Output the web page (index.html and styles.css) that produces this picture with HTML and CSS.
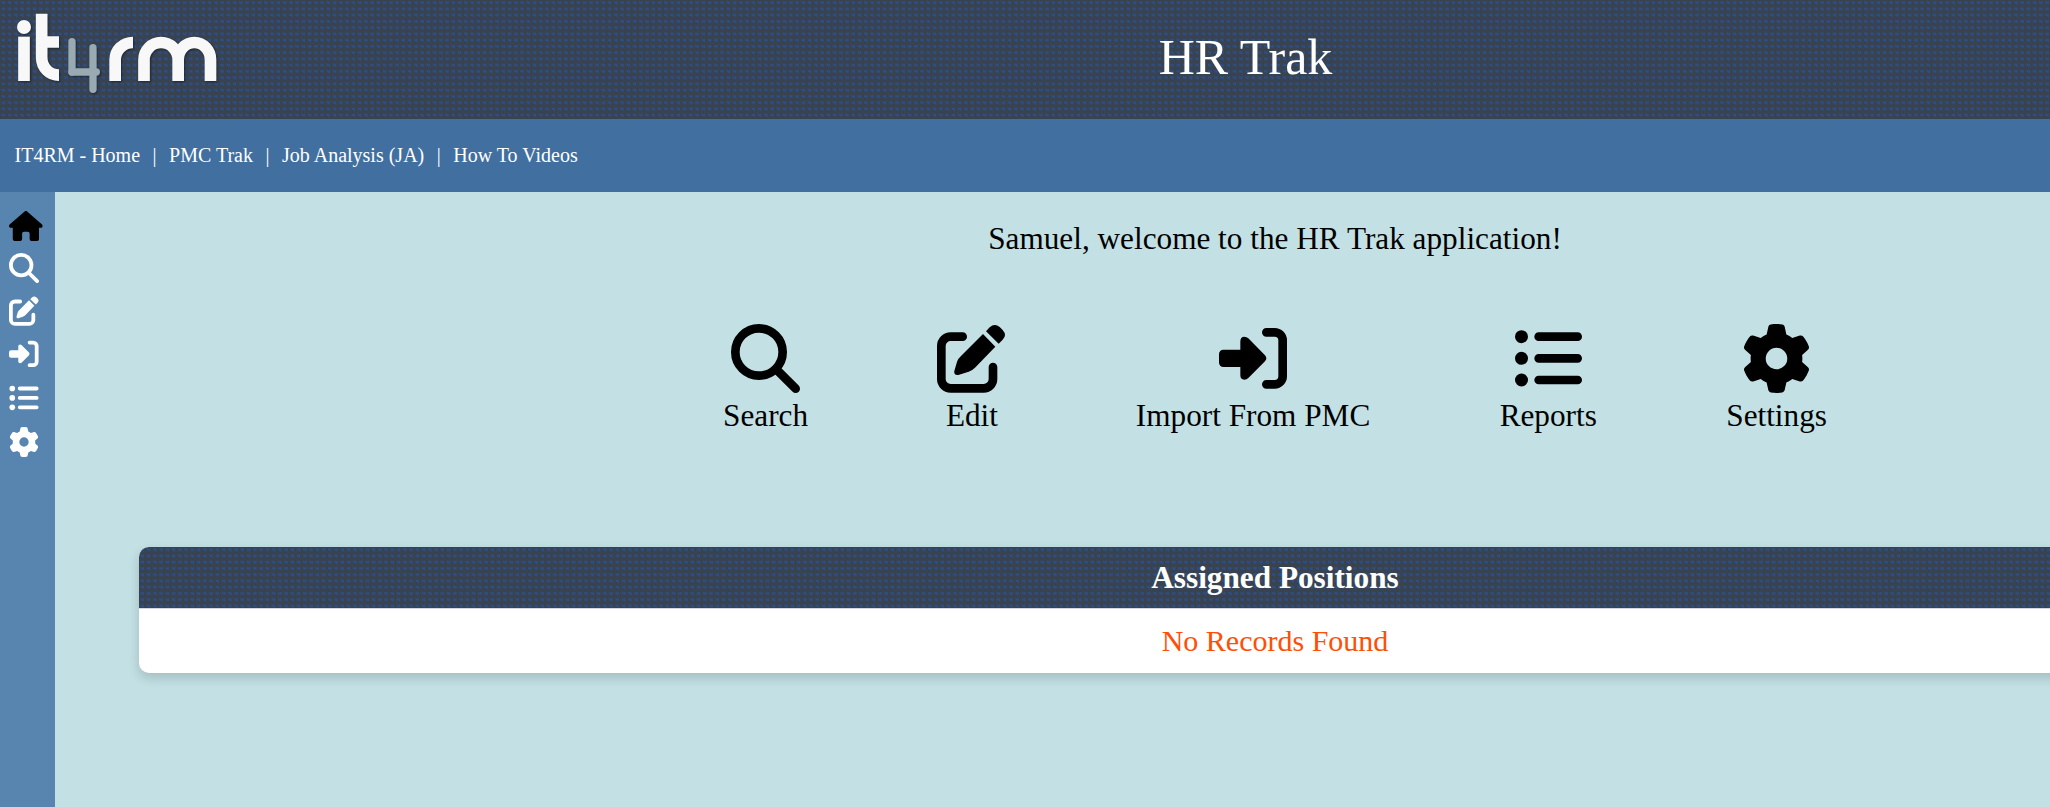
FILE: index.html
```
<!DOCTYPE html>
<html lang="en">
<head>
<meta charset="utf-8">
<title>HR Trak</title>
<link rel="stylesheet" href="styles.css">
</head>
<body>
<svg class="defs" width="0" height="0" aria-hidden="true">
  <symbol id="home" viewBox="0 0 576 512"><path d="M575.8 255.5c0 18-15 32.1-32 32.1h-32l.7 160.2c0 2.7-.2 5.4-.5 8.1V472c0 22.1-17.9 40-40 40H456c-1.1 0-2.2 0-3.3-.1c-1.4 .1-2.8 .1-4.2 .1H416 392c-22.1 0-40-17.9-40-40V448 384c0-17.7-14.3-32-32-32H256c-17.7 0-32 14.3-32 32v64 24c0 22.1-17.9 40-40 40H160 128.1c-1.5 0-3-.1-4.5-.2c-1.2 .1-2.4 .2-3.6 .2H104c-22.1 0-40-17.9-40-40V360c0-.9 0-1.9 .1-2.8V287.6H32c-18 0-32-14-32-32.1c0-9 3-17 10-24L266.4 8c7-7 15-8 22-8s15 2 21 7L564.8 231.5c8 7 12 15 11 24z"/></symbol>
  <symbol id="search" viewBox="0 0 207 207"><g fill="none" stroke="currentColor" stroke-width="26" stroke-linecap="round"><circle cx="84" cy="84" r="71"/><path d="M136 136L194 194"/></g></symbol>
  <symbol id="edit" viewBox="0 0 207 207"><path fill="none" stroke="currentColor" stroke-width="26" stroke-linecap="round" d="M77 38H41a28 28 0 0 0-28 28V165a28 28 0 0 0 28 28H140a28 28 0 0 0 28-28V129"/><path d="M138 30L175 68L114 131Q106 139 95 143L64 153Q50 155 52 141L60 113Q64 103 72 96ZM147 22L158 10Q173-4 188 9L197 18Q211 34 197 47L185 59Z"/></symbol>
  <symbol id="import" viewBox="0 0 207 207"><path fill="none" stroke="currentColor" stroke-width="26" stroke-linecap="round" d="M142 25H167a24 24 0 0 1 24 24V157a24 24 0 0 1-24 24H142"/><path d="M14 77H64V52Q64 38 76 38Q83 38 88 43L138 94Q146 103 138 112L88 162Q83 167 76 167Q64 167 64 154V129H14Q0 129 0 115V91Q0 77 14 77Z"/></symbol>
  <symbol id="list" viewBox="0 0 207 207"><circle cx="22.500" cy="38" r="19.500"/><circle cx="22.500" cy="103" r="19.500"/><circle cx="22.500" cy="168" r="19.500"/><path fill="none" stroke="currentColor" stroke-width="26" stroke-linecap="round" d="M74 38H191M74 103H191M74 168H191"/></symbol>
  <symbol id="gear" viewBox="0 0 512 512"><path d="M495.9 166.6c3.2 8.7 .5 18.4-6.4 24.6l-43.3 39.4c1.1 8.3 1.7 16.8 1.7 25.4s-.6 17.1-1.7 25.4l43.3 39.4c6.9 6.2 9.6 15.900 6.4 24.6c-4.4 11.900-9.700 23.300-15.800 34.300l-4.700 8.100c-6.600 11-14 21.400-22.100 31.200c-5.900 7.200-15.700 9.600-24.500 6.800l-55.700-17.700c-13.400 10.300-28.200 18.900-44 25.400l-12.500 57.100c-2 9.100-9 16.300-18.200 17.800c-13.800 2.300-28 3.500-42.500 3.500s-28.700-1.200-42.500-3.500c-9.200-1.500-16.200-8.700-18.200-17.800l-12.500-57.100c-15.800-6.500-30.600-15.100-44-25.400L83.100 425.900c-8.800 2.800-18.600 .3-24.500-6.800c-8.100-9.800-15.500-20.200-22.100-31.200l-4.700-8.100c-6.100-11-11.400-22.400-15.800-34.300c-3.200-8.700-.5-18.400 6.400-24.600l43.300-39.400C64.600 273.100 64 264.600 64 256s.6-17.100 1.700-25.400L22.400 191.200c-6.900-6.200-9.600-15.900-6.400-24.600c4.400-11.900 9.700-23.300 15.800-34.300l4.700-8.100c6.600-11 14-21.400 22.100-31.200c5.900-7.200 15.700-9.600 24.500-6.800l55.700 17.700c13.400-10.300 28.200-18.900 44-25.400l12.500-57.100c2-9.100 9-16.300 18.200-17.800C227.300 1.200 241.500 0 256 0s28.700 1.200 42.500 3.500c9.200 1.500 16.200 8.700 18.200 17.800l12.500 57.100c15.800 6.500 30.600 15.100 44 25.400l55.700-17.700c8.800-2.800 18.600-.3 24.500 6.800c8.100 9.800 15.500 20.200 22.100 31.200l4.700 8.100c6.100 11 11.400 22.400 15.800 34.300zM256 336a80 80 0 1 0 0-160 80 80 0 1 0 0 160z"/></symbol>
</svg>
<div class="page">
  <header class="banner weave">
    <svg class="logo" viewBox="0 0 720 357" role="img" aria-label="it4rm logo">
      <g fill="#9aaab2"><rect x="205" y="114" width="22" height="113" rx="11"/><rect x="205" y="205" width="95" height="22" rx="11"/><rect x="268" y="132" width="22" height="147" rx="11"/></g>
      <circle cx="72" cy="81" r="21" fill="#f8f8f8"/>
      <g fill="none" stroke="#f8f8f8" stroke-width="35">
        <path d="M72 110V243"/>
        <path d="M125 41V172C125 203 148 225.500 177 225.500M125 126H177"/>
        <path d="M345.500 243V180C345.500 150 369 127.500 399 127.500"/>
        <path d="M432 243V179a51.250 51.500 0 0 1 102.500 0V243M534.500 179a48.500 51.500 0 0 1 97 0V243"/>
      </g>
    </svg>
    <h1 class="title">HR Trak</h1>
  </header>
  <nav class="links"><a>IT4RM - Home</a><span>|</span><a>PMC Trak</a><span>|</span><a>Job Analysis (JA)</a><span>|</span><a>How To Videos</a></nav>
  <div class="body">
    <aside class="rail">
      <svg class="rail-home"><use href="#home"/></svg>
      <svg><use href="#search"/></svg>
      <svg><use href="#edit"/></svg>
      <svg><use href="#import"/></svg>
      <svg><use href="#list"/></svg>
      <svg><use href="#gear"/></svg>
    </aside>
    <main class="content">
      <p class="welcome">Samuel, welcome to the HR Trak application!</p>
      <div class="tiles">
        <a class="tile"><svg><use href="#search"/></svg><span>Search</span></a>
        <a class="tile"><svg><use href="#edit"/></svg><span>Edit</span></a>
        <a class="tile"><svg><use href="#import"/></svg><span>Import From PMC</span></a>
        <a class="tile"><svg><use href="#list"/></svg><span>Reports</span></a>
        <a class="tile"><svg><use href="#gear"/></svg><span>Settings</span></a>
      </div>
      <section class="card">
        <h2 class="card-title weave">Assigned Positions</h2>
        <p class="empty">No Records Found</p>
      </section>
    </main>
  </div>
</div>
</body>
</html>
```
FILE: styles.css
```
* { box-sizing: border-box; }
html, body { height: 100%; }
body { margin: 0; overflow: hidden; background: #c3e0e4; color: #000; font-family: "Liberation Serif", "Times New Roman", serif; }
.defs { display: block; height: 0; }
.page { width: 2495px; height: 807px; display: flex; flex-direction: column; }
.weave {
  background-color: #39434f;
  background-image: url("data:image/svg+xml,%3Csvg xmlns='http://www.w3.org/2000/svg' width='25' height='25' viewBox='0 0 25 25'%3E%3Cdefs%3E%3Cpath id='a' d='M2.300 1.300v1.500h2.200M4.300 1.300v2.900' fill='none' stroke='%232a4f8e' stroke-width='1.300'/%3E%3Cg id='r'%3E%3Cuse href='%23a'/%3E%3Cuse href='%23a' x='6.250'/%3E%3Cuse href='%23a' x='12.500'/%3E%3Cuse href='%23a' x='18.750'/%3E%3C/g%3E%3C/defs%3E%3Cuse href='%23r'/%3E%3Cuse href='%23r' y='6.250'/%3E%3Cuse href='%23r' y='12.500'/%3E%3Cuse href='%23r' y='18.750'/%3E%3C/svg%3E");
  background-size: 25px 25px;
}
.banner { position: relative; height: 119px; padding-right: 4px; display: flex; justify-content: center; }
.logo { position: absolute; left: 0; top: 0; width: 240px; height: 119px; filter: drop-shadow(1px 1px 1px rgba(0, 0, 0, .45)); }
.title { margin: 0; color: #fff; font-size: 50px; font-weight: 400; line-height: 115px; }
.links { height: 73px; padding-left: 14.5px; display: flex; align-items: center; gap: 12.5px; background: #4170a0; color: #fff; font-size: 20px; }
.body { flex: 1; display: flex; }
.rail { width: 55px; padding: 19px 0 0 9px; display: flex; flex-direction: column; gap: 13px; background: #5885af; color: #fff; }
.rail svg { display: block; flex: none; width: 30px; height: 30px; fill: currentColor; }
.rail .rail-home { width: 33.75px; color: #000; margin-bottom: -1px; }
.rail svg:nth-child(n+5) { margin-top: 1px; }
.content { flex: 1; padding: 29px 84px 0; }
.welcome { margin: 0; line-height: 36px; font-size: 31.25px; text-align: center; }
.tiles { margin-top: 67px; display: flex; justify-content: center; gap: 129.4px; }
.tile { display: flex; flex-direction: column; align-items: center; font-size: 31.25px; line-height: 36px; }
.tile svg { display: block; width: 69px; height: 69px; margin-bottom: 5px; fill: currentColor; }
.card { margin-top: 113px; border-radius: 10px; overflow: hidden; background: #fff; box-shadow: 0 5px 12px rgba(0, 0, 0, .16); }
.card-title { margin: 0; height: 62px; border-bottom: 1px solid #d5d8dc; color: #fff; font-size: 31.25px; line-height: 61px; text-align: center; }
.empty { margin: 0; height: 64px; color: #ff4f05; font-size: 30px; line-height: 63px; text-align: center; }
```
